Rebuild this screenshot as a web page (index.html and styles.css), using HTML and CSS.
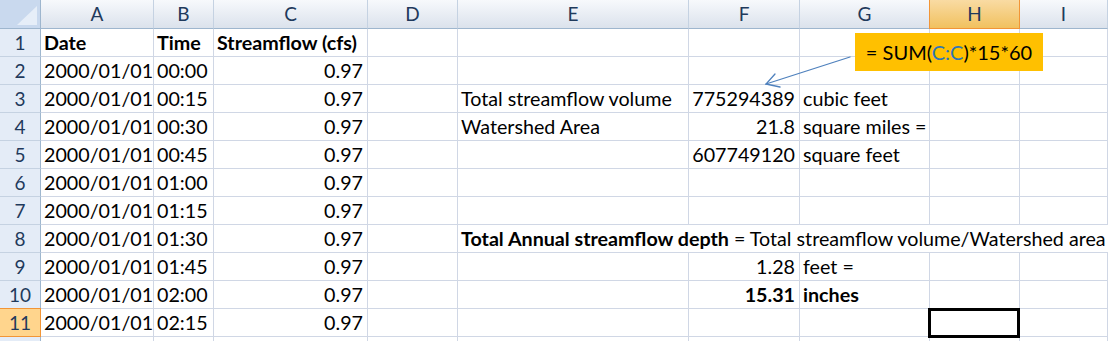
FILE: index.html
```html
<!DOCTYPE html>
<html lang="en">
<head>
	<meta charset="UTF-8">
	<title>Streamflow</title>
	<link rel="stylesheet" href="styles.css">
</head>
<body>
	<div class="sheet">
		<div class="corner"></div>
		<div class="colhead">A</div>
		<div class="colhead">B</div>
		<div class="colhead">C</div>
		<div class="colhead">D</div>
		<div class="colhead">E</div>
		<div class="colhead">F</div>
		<div class="colhead">G</div>
		<div class="colhead active">H</div>
		<div class="colhead">I</div>

		<div class="rowhead">1</div>
		<div class="cell b">Date</div><div class="cell b">Time</div><div class="cell b">Streamflow (cfs)</div>
		<div class="cell"></div><div class="cell"></div><div class="cell"></div><div class="cell"></div><div class="cell"></div><div class="cell"></div>

		<div class="rowhead">2</div>
		<div class="cell">2000/01/01</div><div class="cell">00:00</div><div class="cell num">0.97</div>
		<div class="cell"></div><div class="cell"></div><div class="cell"></div><div class="cell"></div><div class="cell"></div><div class="cell"></div>

		<div class="rowhead">3</div>
		<div class="cell">2000/01/01</div><div class="cell">00:15</div><div class="cell num">0.97</div>
		<div class="cell"></div><div class="cell">Total streamflow volume</div><div class="cell num">775294389</div><div class="cell">cubic feet</div><div class="cell"></div><div class="cell"></div>

		<div class="rowhead">4</div>
		<div class="cell">2000/01/01</div><div class="cell">00:30</div><div class="cell num">0.97</div>
		<div class="cell"></div><div class="cell">Watershed Area</div><div class="cell num">21.8</div><div class="cell">square miles =</div><div class="cell"></div><div class="cell"></div>

		<div class="rowhead">5</div>
		<div class="cell">2000/01/01</div><div class="cell">00:45</div><div class="cell num">0.97</div>
		<div class="cell"></div><div class="cell"></div><div class="cell num">607749120</div><div class="cell">square feet</div><div class="cell"></div><div class="cell"></div>

		<div class="rowhead">6</div>
		<div class="cell">2000/01/01</div><div class="cell">01:00</div><div class="cell num">0.97</div>
		<div class="cell"></div><div class="cell"></div><div class="cell"></div><div class="cell"></div><div class="cell"></div><div class="cell"></div>

		<div class="rowhead">7</div>
		<div class="cell">2000/01/01</div><div class="cell">01:15</div><div class="cell num">0.97</div>
		<div class="cell"></div><div class="cell"></div><div class="cell"></div><div class="cell"></div><div class="cell"></div><div class="cell"></div>

		<div class="rowhead">8</div>
		<div class="cell">2000/01/01</div><div class="cell">01:30</div><div class="cell num">0.97</div>
		<div class="cell"></div><div class="cell span5"><b>Total Annual streamflow depth</b> = Total streamflow volume/Watershed area</div>

		<div class="rowhead">9</div>
		<div class="cell">2000/01/01</div><div class="cell">01:45</div><div class="cell num">0.97</div>
		<div class="cell"></div><div class="cell"></div><div class="cell num">1.28</div><div class="cell">feet =</div><div class="cell"></div><div class="cell"></div>

		<div class="rowhead">10</div>
		<div class="cell">2000/01/01</div><div class="cell">02:00</div><div class="cell num">0.97</div>
		<div class="cell"></div><div class="cell"></div><div class="cell num b">15.31</div><div class="cell b">inches</div><div class="cell"></div><div class="cell"></div>

		<div class="rowhead active">11</div>
		<div class="cell">2000/01/01</div><div class="cell">02:15</div><div class="cell num">0.97</div>
		<div class="cell"></div><div class="cell"></div><div class="cell"></div><div class="cell"></div><div class="cell selected"></div><div class="cell"></div>

		<div class="rowhead"></div>
		<div class="cell"></div><div class="cell"></div><div class="cell"></div>
		<div class="cell"></div><div class="cell"></div><div class="cell"></div><div class="cell"></div><div class="cell"></div><div class="cell"></div>
	</div>

	<!-- formula note pointing at F3 -->
	<div class="callout">= SUM(<span class="ref">C:C</span>)*15*60</div>
	<svg class="arrow" width="1108" height="341" viewBox="0 0 1108 341">
		<g fill="none" stroke="#4f81bd" stroke-width="1.3" stroke-linecap="round">
			<line x1="850" y1="57" x2="766" y2="84"/>
			<polyline points="775,74 766,84 780,87"/>
		</g>
	</svg>
</body>
</html>
```

FILE: styles.css
```css
body{
	margin:0;
	padding:0;
	background:#fff;
	overflow:hidden;
	font-family:Lato, "Noto Sans", sans-serif;
	font-size:19.7px;
	color:#000;
}
.sheet{
	display:grid;
	grid-template-columns:41px 113px 60px 154px 90px 231px 111px 130px 90px 1fr;
	grid-template-rows:29px repeat(12, 28px);
	width:1108px;
}
.corner{
	background:#c9d9ee;
	border-right:1px solid #9eb6ce;
	border-bottom:1px solid #9eb6ce;
	position:relative;
}
.corner::after{
	content:"";
	position:absolute;
	left:17px;
	top:6px;
	width:20px;
	height:19px;
	background:#e6eef8;
	clip-path:polygon(100% 0, 100% 100%, 0 100%);
}
.colhead{
	background:linear-gradient(#f7f9fc, #dbe2ec);
	border-right:1px solid #c5d2e2;
	border-bottom:1px solid #9eb6ce;
	color:#1f3a5c;
	text-align:center;
	line-height:28px;
	font-size:19px;
}
.colhead.active{
	background:linear-gradient(#f9dba3, #f1c15f);
	border-left:1px solid #f29536;
	border-right:1px solid #f29536;
	border-bottom:1px solid #f29536;
	margin-left:-1px;
}
.rowhead{
	background:#e4ecf7;
	border-right:1px solid #9eb6ce;
	border-bottom:1px solid #c5d2e2;
	color:#1f3a5c;
	text-align:center;
	line-height:27px;
	font-size:19px;
}
.rowhead.active{
	background:#ffd58d;
	border-right:1px solid #f29536;
	border-bottom:1px solid #f29536;
	border-top:1px solid #f29536;
	margin-top:-1px;
	line-height:28px;
}
.cell{
	border-right:1px solid #d0d7e5;
	border-bottom:1px solid #d0d7e5;
	padding:0 4px 0 3px;
	line-height:27px;
	white-space:nowrap;
	overflow:visible;
}
.num{
	text-align:right;
}
.b{
	font-weight:bold;
}
.span5{
	grid-column:span 5;
	border-right:none;
}
.selected{
	position:relative;
}
.selected::after{
	content:"";
	position:absolute;
	left:-2px;
	top:-1px;
	right:-1px;
	bottom:-2px;
	border:3px solid #000;
}
.callout{
	position:absolute;
	left:855px;
	top:33px;
	width:188px;
	height:38px;
	background:#ffc000;
	text-align:center;
	line-height:38px;
	font-size:20px;
}
.ref{
	color:#2e75b6;
}
.arrow{
	position:absolute;
	left:0;
	top:0;
	pointer-events:none;
}
```
